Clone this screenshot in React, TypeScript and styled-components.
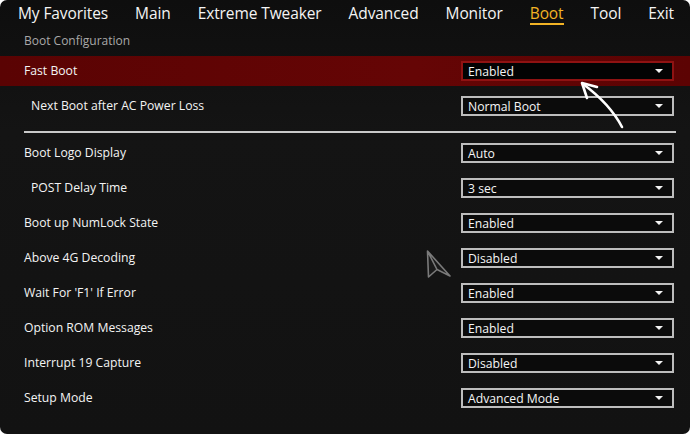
import styled, { createGlobalStyle } from 'styled-components';

const GlobalStyle = createGlobalStyle`
  html, body {
    margin: 0;
    padding: 0;
    background: #ffffff;
  }
  body {
    font-family: 'Open Sans', 'DejaVu Sans', sans-serif;
  }
`;

const Screen = styled.div`
  position: relative;
  width: 690px;
  height: 434px;
  box-sizing: border-box;
  border-radius: 7px;
  overflow: hidden;
  background: linear-gradient(180deg, #0e0e0e 0%, #141414 30%, #121212 100%);
  color: #f2f2f2;
`;

const TabBar = styled.nav`
  display: flex;
  align-items: center;
  gap: 27px;
  height: 26px;
  padding-left: 18px;
`;

const Tab = styled.span<{ $active?: boolean }>`
  position: relative;
  font-size: 15.5px;
  line-height: 20px;
  color: ${(p) => (p.$active ? '#f2b325' : '#f4f4f4')};
  letter-spacing: -0.1px;
  ${(p) =>
    p.$active &&
    `
    &::after {
      content: '';
      position: absolute;
      left: 0;
      right: 0;
      bottom: -2px;
      height: 2px;
      background: #f2b325;
    }
  `}
`;

const SectionTitle = styled.div`
  height: 29px;
  padding-left: 24px;
  display: flex;
  align-items: center;
  font-size: 12px;
  color: #a9a9a9;
`;

const List = styled.div<{ $top?: number }>`
  display: flex;
  flex-direction: column;
  gap: 5px;
  margin-top: ${(p) => p.$top ?? 0}px;
`;

const Row = styled.div<{ $selected?: boolean; $indent?: boolean }>`
  display: grid;
  grid-template-columns: 1fr 213px;
  align-items: center;
  height: 30px;
  padding-left: ${(p) => (p.$indent ? '31px' : '24px')};
  padding-right: 16px;
  background: ${(p) => (p.$selected ? 'linear-gradient(90deg, #5a0303 0%, #650505 60%, #5c0303 100%)' : 'transparent')};
`;

const Label = styled.span`
  font-size: 12.2px;
  color: #f4f4f4;
  transform: translateY(-1px);
`;

const Select = styled.div<{ $selected?: boolean }>`
  display: flex;
  align-items: center;
  justify-content: space-between;
  height: 20px;
  box-sizing: border-box;
  padding: 0 9px 0 5px;
  border: 2px solid ${(p) => (p.$selected ? '#8f1212' : '#bdbdbd')};
  background: ${(p) => (p.$selected ? '#030303' : '#0b0b0b')};
  font-size: 12.2px;
  color: #f5f5f5;
`;

const Caret = styled.span`
  width: 0;
  height: 0;
  border-left: 4px solid transparent;
  border-right: 4px solid transparent;
  border-top: 4px solid #f2f2f2;
`;

const Divider = styled.div`
  height: 2px;
  margin: 10px 14px 0 24px;
  background: #c9c9c9;
`;

const Overlay = styled.svg`
  position: absolute;
  left: 0;
  top: 0;
  pointer-events: none;
`;

const tabs = ['My Favorites', 'Main', 'Extreme Tweaker', 'Advanced', 'Monitor', 'Boot', 'Tool', 'Exit'];

const rowsTop = [
  { label: 'Fast Boot', value: 'Enabled', selected: true },
  { label: 'Next Boot after AC Power Loss', value: 'Normal Boot', indent: true },
];

const rowsBottom = [
  { label: 'Boot Logo Display', value: 'Auto' },
  { label: 'POST Delay Time', value: '3 sec', indent: true },
  { label: 'Boot up NumLock State', value: 'Enabled' },
  { label: 'Above 4G Decoding', value: 'Disabled' },
  { label: "Wait For 'F1' If Error", value: 'Enabled' },
  { label: 'Option ROM Messages', value: 'Enabled' },
  { label: 'Interrupt 19 Capture', value: 'Disabled' },
  { label: 'Setup Mode', value: 'Advanced Mode' },
];

type Item = { label: string; value: string; selected?: boolean; indent?: boolean };

const SettingRow = ({ item }: { item: Item }) => (
  <Row $selected={item.selected} $indent={item.indent}>
    <Label>{item.label}</Label>
    <Select $selected={item.selected}>
      <span>{item.value}</span>
      <Caret />
    </Select>
  </Row>
);

export default function App() {
  return (
    <>
      <GlobalStyle />
      <Screen>
        <TabBar>
          {tabs.map((t) => (
            <Tab key={t} $active={t === 'Boot'}>
              {t}
            </Tab>
          ))}
        </TabBar>
        <SectionTitle>Boot Configuration</SectionTitle>
        <List $top={1}>
          {rowsTop.map((r) => (
            <SettingRow key={r.label} item={r} />
          ))}
        </List>
        <Divider />
        <List $top={5}>
          {rowsBottom.map((r) => (
            <SettingRow key={r.label} item={r} />
          ))}
        </List>

        {/* annotation arrow + mouse cursor */}
        <Overlay width="690" height="434" viewBox="0 0 690 434">
          <path
            d="M622 127 Q 610 104 583 84"
            stroke="#ffffff"
            strokeWidth="2.6"
            fill="none"
            strokeLinecap="round"
          />
          <path
            d="M597 87 L582 83 L587 98"
            stroke="#ffffff"
            strokeWidth="2.6"
            fill="none"
            strokeLinecap="round"
            strokeLinejoin="round"
          />
          <path
            d="M427.5 251 L450 276 L437 269.5 L428.5 277 Z M427.5 251 L437 269.5"
            stroke="#7a7a7a"
            strokeWidth="1.6"
            fill="#1a1a1a"
            strokeLinejoin="round"
          />
        </Overlay>
      </Screen>
    </>
  );
}
